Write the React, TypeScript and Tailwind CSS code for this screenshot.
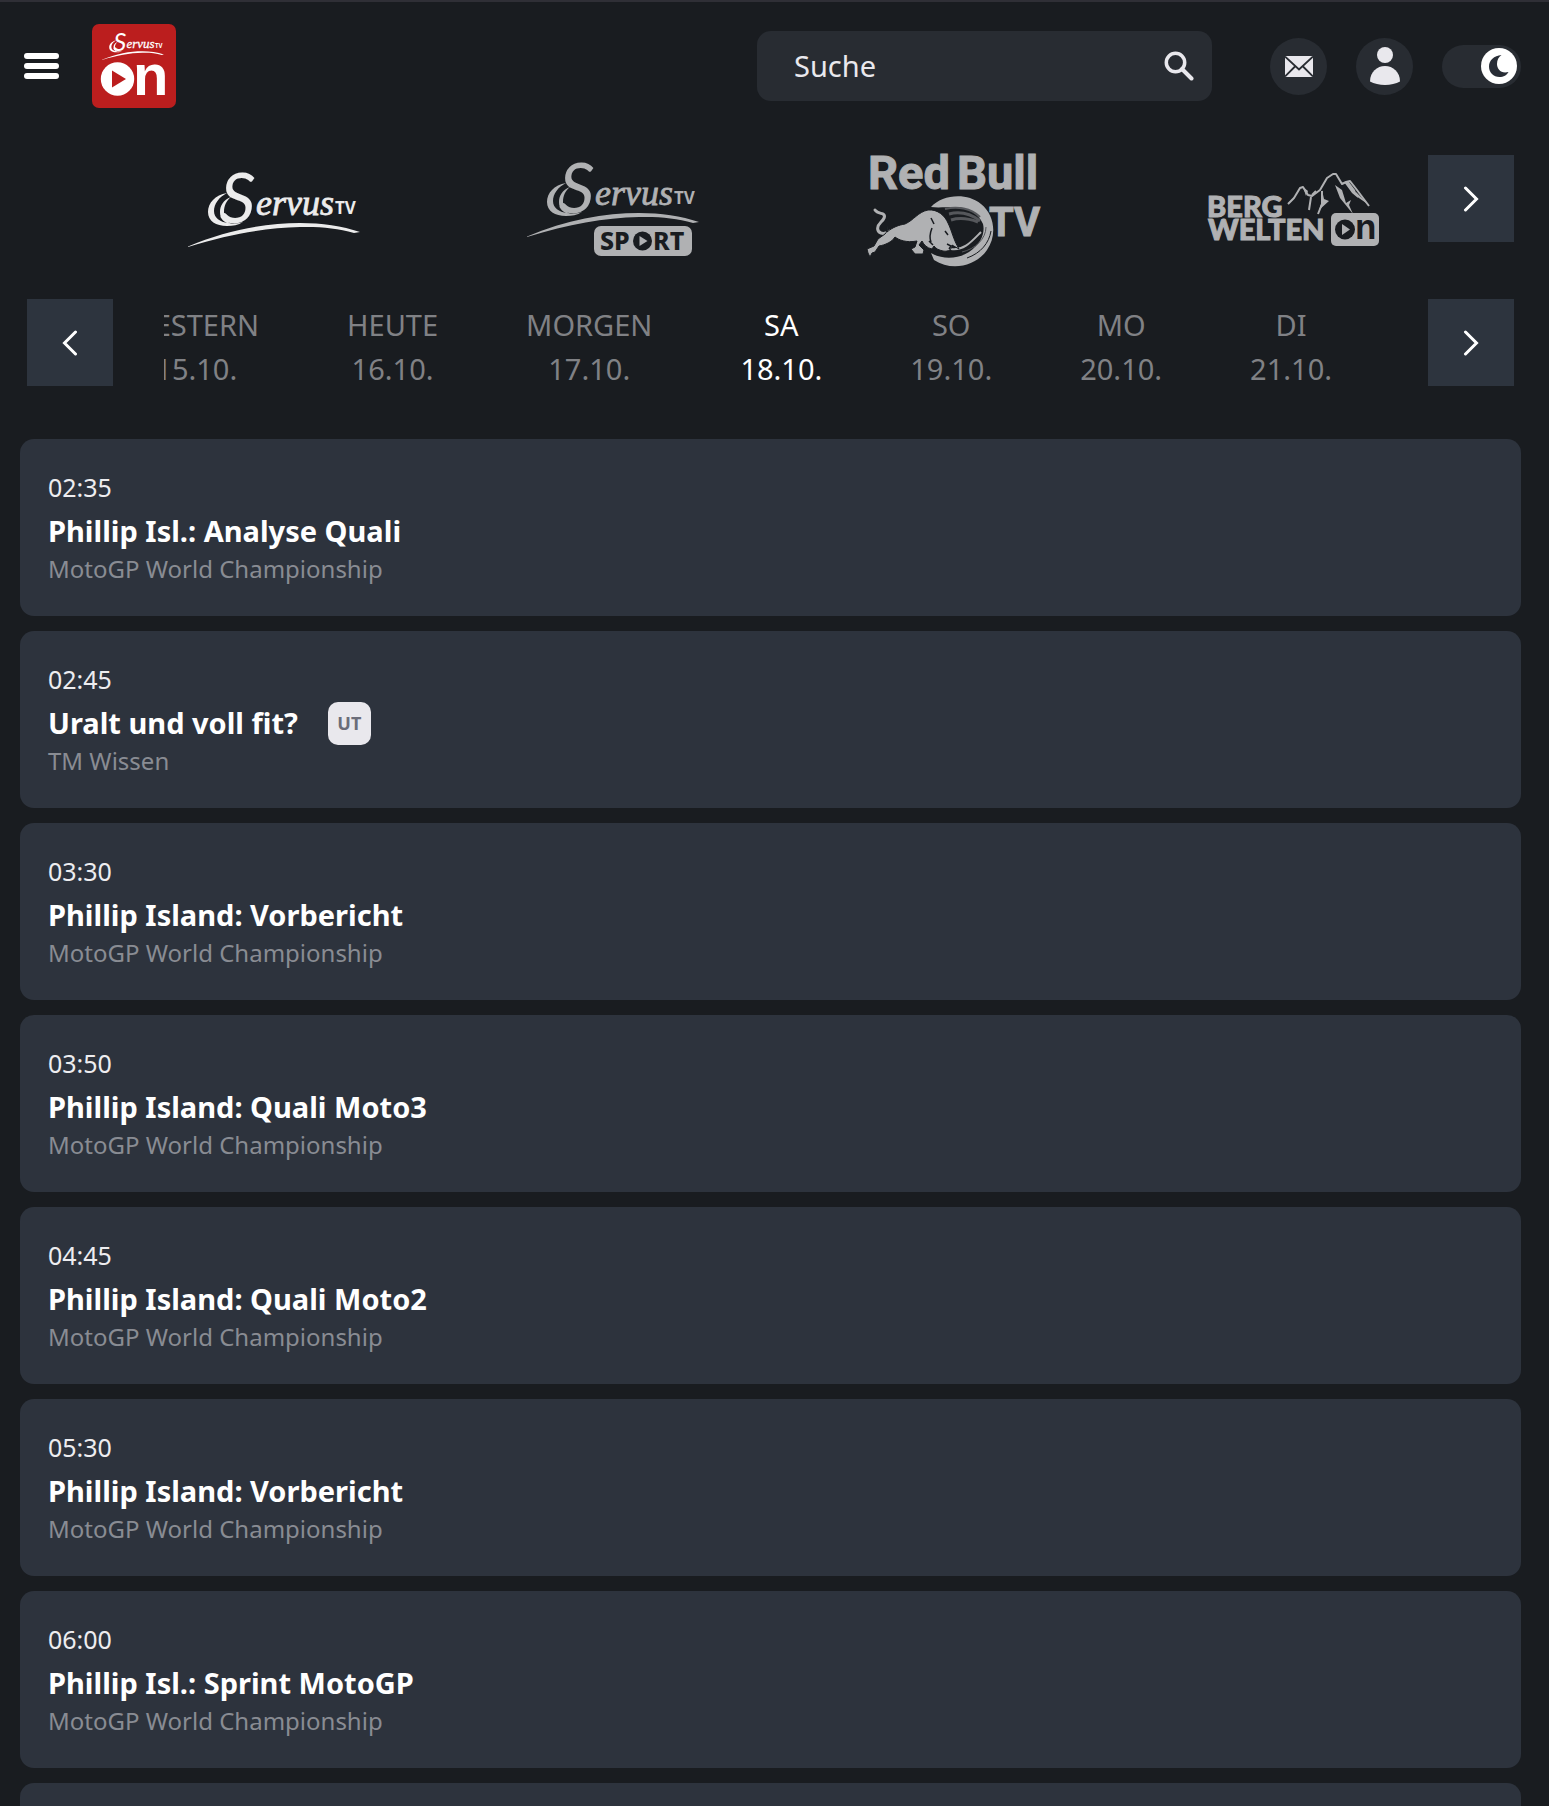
import { useState } from 'react';

type Programme = {
  time: string;
  title: string;
  series: string;
  subtitled?: boolean;
};

const PROGRAMMES: Programme[] = [
  { time: '02:35', title: 'Phillip Isl.: Analyse Quali', series: 'MotoGP World Championship' },
  { time: '02:45', title: 'Uralt und voll fit?', series: 'TM Wissen', subtitled: true },
  { time: '03:30', title: 'Phillip Island: Vorbericht', series: 'MotoGP World Championship' },
  { time: '03:50', title: 'Phillip Island: Quali Moto3', series: 'MotoGP World Championship' },
  { time: '04:45', title: 'Phillip Island: Quali Moto2', series: 'MotoGP World Championship' },
  { time: '05:30', title: 'Phillip Island: Vorbericht', series: 'MotoGP World Championship' },
  { time: '06:00', title: 'Phillip Isl.: Sprint MotoGP', series: 'MotoGP World Championship' },
];

const DAYS = [
  { label: 'GESTERN', date: '15.10.' },
  { label: 'HEUTE', date: '16.10.' },
  { label: 'MORGEN', date: '17.10.' },
  { label: 'SA', date: '18.10.' },
  { label: 'SO', date: '19.10.' },
  { label: 'MO', date: '20.10.' },
  { label: 'DI', date: '21.10.' },
];

const ServusMark = () => (
  <g fill="currentColor">
    <text x="32" y="73" fontFamily="Lato, sans-serif" fontSize="70" fontStyle="italic">
      S
    </text>
    <text
      x="68"
      y="65"
      fontFamily="'Liberation Serif', serif"
      fontSize="36"
      fontStyle="italic"
      stroke="currentColor"
      strokeWidth=".8"
    >
      ervus
    </text>
    <text x="147" y="64" fontFamily="'Noto Sans', sans-serif" fontSize="17" fontWeight="700">
      TV
    </text>
    <path d="M39 43C27 45 20 53 20 62c0 9 8 14 19 14 6 0 11-1 16-4-6 2-11 2-15 1-8-1-14-5-14-12 0-7 5-14 13-18z" />
    <path d="M43 47c-8 3-11 9-11 15 0 7 4 11 11 12-5-3-7-7-7-12 0-6 2-11 7-15z" />
    <path d="M0 96.500C39 80 78 73 112 73c22 0 42 3 60 9l-6 1C149 78 132 76.500 112 77 77 78 42 84 0 97z" />
  </g>
);

const OnLogo = () => (
  <svg viewBox="0 0 84 84" className="size-[84px]" aria-hidden="true">
    <rect width="84" height="84" rx="7" fill="#bb1e1e" />
    <g color="#fff" transform="translate(10 1) scale(.36)">
      <ServusMark />
    </g>
    <circle cx="25.500" cy="55" r="16.700" fill="#fff" />
    <path d="M20 46.500 34 55 20 63.500z" fill="#bb1e1e" />
    <text x="41" y="71" fontFamily="'Liberation Sans', sans-serif" fontSize="58" fontWeight="700" fill="#fff">
      n
    </text>
  </svg>
);

const ServusTv = () => (
  <svg viewBox="0 0 174 120" className="h-[120px] w-[174px] overflow-visible text-[#ececec]" aria-hidden="true">
    <ServusMark />
  </svg>
);

const ServusSport = () => (
  <svg viewBox="0 0 174 120" className="h-[120px] w-[174px] overflow-visible text-[#b0b1b3]" aria-hidden="true">
    <g transform="translate(0 -10)">
      <ServusMark />
    </g>
    <rect x="67" y="76" width="98" height="30" rx="7" fill="currentColor" />
    <g fill="#191c20" fontFamily="'Noto Sans', sans-serif" fontSize="25" fontWeight="800">
      <text x="73" y="100">SP</text>
      <text x="126" y="100">RT</text>
      <circle cx="115.500" cy="91" r="9.500" />
    </g>
    <path d="m112.500 86 8 5-8 5z" fill="currentColor" />
  </svg>
);

const RedBullTv = () => (
  <svg viewBox="0 0 174 120" className="h-[120px] w-[174px] overflow-visible text-[#b0b1b3]" aria-hidden="true">
    <g fill="currentColor" stroke="currentColor" fontFamily="Roboto, sans-serif" fontWeight="700" fontSize="47">
      <text x="1" y="39">Red</text>
      <text x="90" y="39">Bull</text>
      <text x="122" y="86" fontSize="40">TV</text>
    </g>
    <path
      d="M64 57C75 45 99 42 114 54c14 11 16 32 6 46-11 16-35 22-53 10l-3-7c12 7 27 6 38-1 13-9 16-20 14-28-4-10-15-17-28-17-9 0-17 1-24 0z"
      fill="currentColor"
    />
    <g fill="none" stroke="#55575b" strokeWidth="2">
      <path d="M78 59c12-3 26-1 35 8" />
      <path d="M82 64c12-3 22 0 31 7" strokeWidth="3" />
      <path d="M84 70c10-3 19-1 27 2" strokeWidth="3" />
      <path d="M124 81c-2 12-10 22-24 27" stroke="#191c20" strokeWidth="1" />
      <path d="M119 77c0 12-11 22-24 25" strokeWidth="1" />
      <path d="M84 99c13 2 21-8 30-17" stroke="#b0b1b3" />
    </g>
    {/* tail */}
    <path
      d="M8 60c2 3 5 3 8 4 3 2 1 5-2 8-4 4-5 9 0 11 3 1 6 0 9-2"
      fill="none"
      stroke="currentColor"
      strokeWidth="3"
      strokeLinecap="round"
    />
    <path
      d="M20 82c6-5 12-7 18-8 9-4 13-12 23-14 10-1 17 6 20 13 4 8 5 16 11 26l-7-4c0 4-3 7-9 6-4-1-7-2-9-5l-2 3c-5-1-8-4-10-8l-3 4 5 5-1 4h-8l-4-5 4-2 2-6c-11 2-18-1-22-4-3 5-10 8-16 9l-4 6-3 1-2 4-2-4-1-4 7-3 4-7 7-5c2-2 3-5 2-8z"
      fill="currentColor"
      stroke="#191c20"
    />
    <g fill="none" stroke="#191c20" strokeWidth="1.500">
      <path d="m64 68 3 6" />
      <path d="M65 78c-2 5-3 9-1 14M78 81l3 4M80 94l4 2-2 3M62 91l4 4" />
    </g>
  </svg>
);

const BergweltenOn = () => (
  <svg viewBox="0 0 174 120" className="h-[120px] w-[174px] overflow-visible text-[#b0b1b3]" aria-hidden="true">
    <g fill="currentColor" stroke="currentColor" fontFamily="Lato, sans-serif" fontWeight="900" fontSize="29">
      <text x="1" y="67">BERG</text>
      <text x="2" y="90">WELTEN</text>
    </g>
    <g fill="none" stroke="currentColor" strokeWidth="2" strokeLinejoin="round">
      <path d="m82 54 6-6 6-10 3-1 5 8 4 1 8-6 7-12 6-4h3l6 10 4-2 4-1 7 9 12 16" />
      <path d="m105 47-2 13M116 41v13l-4 10M106 45l4-4" />
    </g>
    <path
      d="m97 37 5 4-2 5zM129 35l7 5 4 13 5-3-2 5 4 9-13-16zM138 32h5l6 8 3 8-6-5zM116 40l2 9 5 2-10 9 3-9zM150 42l13 13-13-9z"
      fill="currentColor"
    />
    <rect x="125" y="63" width="48" height="33" rx="5" fill="currentColor" />
    <circle cx="139" cy="79.500" r="10" fill="#191c20" />
    <path d="m136 74 8 5.500-8 5.500z" fill="currentColor" />
    <text x="149" y="89" fontFamily="'Liberation Sans', sans-serif" fontWeight="700" fontSize="35" fill="#191c20">
      n
    </text>
  </svg>
);

const CHANNELS = [
  { name: 'ServusTV', Logo: ServusTv },
  { name: 'ServusTV Sport', Logo: ServusSport },
  { name: 'Red Bull TV', Logo: RedBullTv },
  { name: 'Bergwelten', Logo: BergweltenOn },
];

const ArrowButton = ({ label, back, onClick }: { label: string; back?: boolean; onClick?: () => void }) => (
  <button
    type="button"
    aria-label={label}
    onClick={onClick}
    className="flex h-[87px] w-[86px] shrink-0 items-center justify-center bg-[#2d343e] text-white"
  >
    <svg viewBox="0 0 16 26" className="h-[26px] w-4" fill="none" stroke="currentColor" strokeWidth="3" strokeLinecap="round">
      <path d={back ? 'M13.500 2 2.500 13l11 11' : 'M2.500 2l11 11-11 11'} />
    </svg>
  </button>
);

const Header = () => {
  const [dark, setDark] = useState(true);

  return (
    <header className="flex items-center justify-between border-t-2 border-[#2f2f36] pt-[22px] pr-7 pl-6">
      <div className="flex items-center gap-[33px]">
        <button type="button" aria-label="Menü" className="flex flex-col gap-1">
          <span className="h-[6px] w-[35px] rounded-full bg-white" />
          <span className="h-[6px] w-[35px] rounded-full bg-white" />
          <span className="h-[6px] w-[35px] rounded-full bg-white" />
        </button>
        <a href="#" aria-label="ServusTV On">
          <OnLogo />
        </a>
      </div>
      <div className="flex items-center gap-[29px]">
        <form className="mr-[29px] flex h-[70px] w-[455px] items-center rounded-[14px] bg-[#282c32] pr-[18px] pl-[37px]">
          <input
            type="search"
            aria-label="Suche"
            placeholder="Suche"
            className="min-w-0 flex-1 bg-transparent text-[29px] leading-10 text-[#e9e8ed] outline-none placeholder:text-[#e9e8ed]"
          />
          <button type="button" aria-label="Suchen" className="text-[#e9e8ed]">
            <svg viewBox="0 0 30 30" className="size-[30px]" fill="none" stroke="currentColor">
              <circle cx="11.500" cy="11.500" r="9.200" strokeWidth="3.500" />
              <path d="m18 18 9.500 9.500" strokeWidth="4" strokeLinecap="round" />
            </svg>
          </button>
        </form>
        <a href="#" aria-label="Newsletter" className="flex size-[57px] items-center justify-center rounded-full bg-[#282c32]">
          <svg viewBox="0 0 28 21" className="h-[21px] w-7">
            <rect width="28" height="21" fill="#e9e8ed" />
            <path d="m0 .5 14 13 14-13M0 20.500l10-10M28 20.500l-10-10" fill="none" stroke="#282c32" strokeWidth="1.800" />
          </svg>
        </a>
        <a href="#" aria-label="Profil" className="flex size-[57px] items-center justify-center rounded-full bg-[#282c32]">
          <svg viewBox="0 0 30 38" className="h-[38px] w-[30px]" fill="#e9e8ed">
            <circle cx="15" cy="8" r="8" />
            <path d="M0 34.500C0 25 7 19 15 19s15 6 15 15.500c-8 4.500-22 4.500-30 0z" />
          </svg>
        </a>
        <label className="flex h-[43px] w-[79px] cursor-pointer items-center justify-end rounded-full bg-[#282c32] p-1">
          <input
            type="checkbox"
            aria-label="Dunkler Modus"
            checked={dark}
            onChange={(e) => setDark(e.target.checked)}
            className="sr-only"
          />
          <span className="flex size-9 items-center justify-center rounded-full bg-white">
            <svg viewBox="0 0 20 22" className="h-[22px] w-5" fill="#282d36">
              <path d="M12.500 0C5 .5 0 5.500 0 11.500 0 17.500 4.500 22 10.500 22c4 0 7.500-2 9-5C12 19 8 14 8 9c0-4 1.500-7 4.500-9z" />
            </svg>
          </span>
        </label>
      </div>
    </header>
  );
};

const ProgrammeCard = ({ programme }: { programme: Programme }) => (
  <li className="rounded-[14px] bg-[#2d333d] px-7 pt-[26px] pb-[31px]">
    <time className="block text-[25px] leading-[44px] text-[#ededf0]">{programme.time}</time>
    <div className="flex items-center gap-[30px]">
      <h2 className="text-[29px] leading-[44px] font-bold text-white">{programme.title}</h2>
      {programme.subtitled && (
        <span className="flex size-[43px] items-center justify-center rounded-[10px] bg-[#e9e8ed] text-[18px] font-bold text-[#6b6d79]">
          UT
        </span>
      )}
    </div>
    <p className="text-[24px] leading-8 text-[#898c93]">{programme.series}</p>
  </li>
);

export default function App() {
  const [activeDay, setActiveDay] = useState(3);

  return (
    <div className="min-h-screen bg-[#191c20] font-['Noto_Sans',sans-serif]">
      <Header />

      <nav aria-label="Sender" className="mt-[42px] flex items-start gap-12 pr-[35px] pl-[188px]">
        <div className="flex flex-1 items-center justify-between">
          {CHANNELS.map(({ name, Logo }) => (
            <a key={name} href="#" aria-label={name}>
              <Logo />
            </a>
          ))}
        </div>
        <div className="pt-[5px]">
          <ArrowButton label="Weitere Sender" />
        </div>
      </nav>

      <nav aria-label="Tage" className="mt-[29px] flex items-start pr-[35px] pl-[27px]">
        <ArrowButton label="Vorheriger Tag" back onClick={() => setActiveDay(Math.max(activeDay - 1, 0))} />
        <div className="mr-24 ml-[51px] flex min-w-0 flex-1 justify-end gap-[88px] overflow-hidden pt-1">
          {DAYS.map((day, index) => (
            <button
              key={day.date}
              type="button"
              onClick={() => setActiveDay(index)}
              className={`flex shrink-0 flex-col items-center text-[29px] leading-[44px] ${
                index === activeDay ? 'text-white' : 'text-[#808185]'
              }`}
            >
              <span>{day.label}</span>
              <span>{day.date}</span>
            </button>
          ))}
        </div>
        <ArrowButton
          label="Nächster Tag"
          onClick={() => setActiveDay(Math.min(activeDay + 1, DAYS.length - 1))}
        />
      </nav>

      <ul className="mt-12 flex flex-col gap-[15px] pr-7 pl-5">
        {PROGRAMMES.map((programme) => (
          <ProgrammeCard key={programme.time} programme={programme} />
        ))}
        <li aria-hidden="true" className="h-6 rounded-t-[14px] bg-[#2d333d]" />
      </ul>
    </div>
  );
}
